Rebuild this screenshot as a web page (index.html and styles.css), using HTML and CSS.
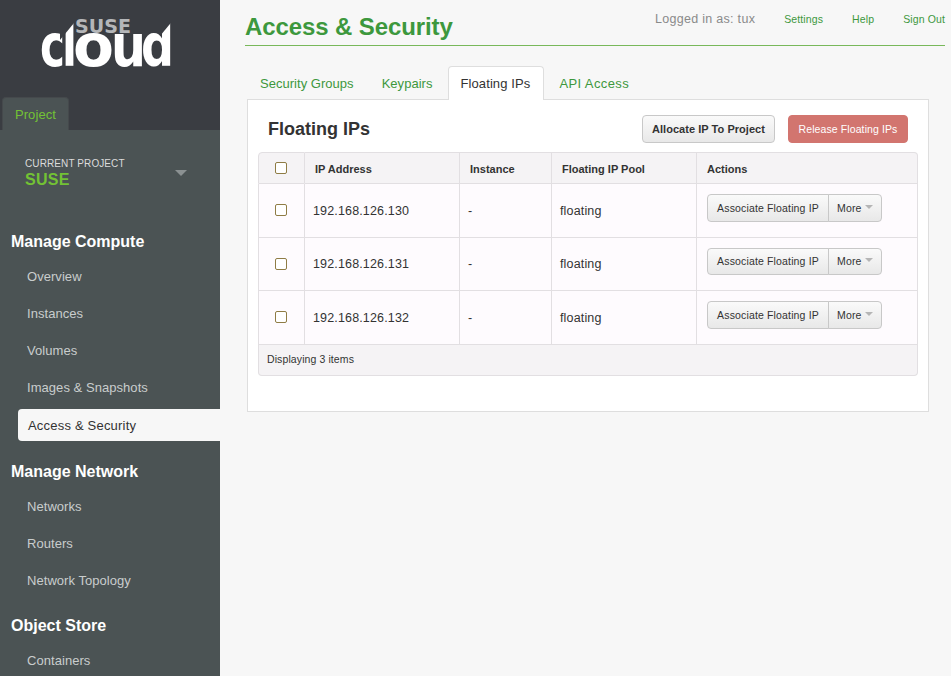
FILE: index.html
```html
<!DOCTYPE html>
<html lang="en">
<head>
<meta charset="utf-8">
<title>Access &amp; Security</title>
<link rel="stylesheet" href="styles.css">
</head>
<body>
<div class="page">
  <aside class="sidebar">
    <div class="brand">
      <svg class="logo" width="220" height="97" viewBox="0 0 220 97" role="img" aria-label="SUSE cloud">
        <text class="logo-cloud" x="40" y="66" textLength="25" lengthAdjust="spacingAndGlyphs">c</text>
        <text class="logo-cloud" x="62" y="66" textLength="15" lengthAdjust="spacingAndGlyphs">l</text>
        <text class="logo-cloud" x="73" y="66" textLength="41" lengthAdjust="spacingAndGlyphs">o</text>
        <text class="logo-cloud" x="111" y="66" textLength="35" lengthAdjust="spacingAndGlyphs">u</text>
        <text class="logo-cloud" x="141" y="66" textLength="33" lengthAdjust="spacingAndGlyphs">d</text>
        <polygon class="logo-cut" points="60,40 74,23 74,18 60,18"/>
        <polygon class="logo-cut" points="160,36 172,21.5 172,18 160,18"/>
        <text class="logo-suse" x="75" y="33" textLength="56" lengthAdjust="spacingAndGlyphs">SUSE</text>
      </svg>
      <div class="dash-tabs"><a class="dash-tab">Project</a></div>
    </div>
    <div class="nav-body">
      <div class="switcher">
        <div>
          <div class="switcher-label">CURRENT PROJECT</div>
          <div class="switcher-name">SUSE</div>
        </div>
        <span class="switcher-caret"></span>
      </div>
      <h4 class="nav-head nav-head-first">Manage Compute</h4>
      <ul class="nav-list">
        <li>Overview</li>
        <li>Instances</li>
        <li>Volumes</li>
        <li>Images &amp; Snapshots</li>
        <li class="active">Access &amp; Security</li>
      </ul>
      <h4 class="nav-head nav-head-network">Manage Network</h4>
      <ul class="nav-list">
        <li>Networks</li>
        <li>Routers</li>
        <li>Network Topology</li>
      </ul>
      <h4 class="nav-head">Object Store</h4>
      <ul class="nav-list">
        <li>Containers</li>
      </ul>
    </div>
  </aside>
  <main class="main">
    <header class="page-header">
      <h2 class="page-title">Access &amp; Security</h2>
      <div class="user-info">
        <span class="logged">Logged in as: tux</span>
        <a class="user-link">Settings</a>
        <a class="user-link">Help</a>
        <a class="user-link">Sign Out</a>
      </div>
    </header>
    <nav class="tabs">
      <a class="tab">Security Groups</a>
      <a class="tab">Keypairs</a>
      <a class="tab tab-active">Floating IPs</a>
      <a class="tab tab-last">API Access</a>
    </nav>
    <section class="panel">
      <div class="panel-head">
        <h3 class="panel-title">Floating IPs</h3>
        <div class="panel-actions">
          <button class="btn btn-strong">Allocate IP To Project</button>
          <button class="btn btn-danger">Release Floating IPs</button>
        </div>
      </div>
      <table class="table">
        <thead>
          <tr>
            <th class="col-check"><span class="check"></span></th>
            <th class="col-ip">IP Address</th>
            <th class="col-inst">Instance</th>
            <th class="col-pool">Floating IP Pool</th>
            <th>Actions</th>
          </tr>
        </thead>
        <tbody>
          <tr>
            <td class="col-check"><span class="check"></span></td>
            <td class="cell-ip">192.168.126.130</td>
            <td>-</td>
            <td>floating</td>
            <td class="cell-actions"><span class="btn-group"><button class="btn btn-small">Associate Floating IP</button><button class="btn btn-small btn-more">More<i class="more-caret"></i></button></span></td>
          </tr>
          <tr>
            <td class="col-check"><span class="check"></span></td>
            <td class="cell-ip">192.168.126.131</td>
            <td>-</td>
            <td>floating</td>
            <td class="cell-actions"><span class="btn-group"><button class="btn btn-small">Associate Floating IP</button><button class="btn btn-small btn-more">More<i class="more-caret"></i></button></span></td>
          </tr>
          <tr>
            <td class="col-check"><span class="check"></span></td>
            <td class="cell-ip">192.168.126.132</td>
            <td>-</td>
            <td>floating</td>
            <td class="cell-actions"><span class="btn-group"><button class="btn btn-small">Associate Floating IP</button><button class="btn btn-small btn-more">More<i class="more-caret"></i></button></span></td>
          </tr>
        </tbody>
        <tfoot>
          <tr><td colspan="5">Displaying 3 items</td></tr>
        </tfoot>
      </table>
    </section>
  </main>
</div>
</body>
</html>
```
FILE: styles.css
```css
* { box-sizing: border-box; }
html, body { margin: 0; height: 100%; overflow: hidden; }
body { background: #f7f7f7; font-family: "Liberation Sans", Arial, sans-serif; color: #333; }
.page { display: flex; height: 676px; overflow: hidden; }

.sidebar { width: 220px; flex: none; background: #4b5354; overflow: hidden; }
.brand { height: 130px; background: #3a3d42; display: flex; flex-direction: column; }
.logo { display: block; flex: none; }
.logo-suse { font: bold 19px "DejaVu Sans", sans-serif; fill: #b4b6b8; }
.logo-cloud { font: bold 58px "DejaVu Sans", sans-serif; fill: #fff; }
.logo-cut { fill: #3a3d42; }
.dash-tabs { padding-left: 2px; }
.dash-tab { display: block; width: 67px; height: 33px; background: #4b5354; border: 1px solid #45494c; border-bottom: 0; border-radius: 4px 4px 0 0; color: #73c234; font-size: 13px; line-height: 33px; text-align: center; letter-spacing: .1px; }

.nav-body { padding-top: 28px; }
.switcher { display: flex; justify-content: space-between; padding: 0 33px 0 25px; height: 33px; }
.switcher-label { font-size: 10px; line-height: 11px; color: #dcdcdc; letter-spacing: .1px; }
.switcher-name { font-size: 16px; font-weight: bold; line-height: 21px; color: #73c234; letter-spacing: .3px; }
.switcher-caret { margin-top: 12px; width: 0; height: 0; border: 6px solid transparent; border-top-color: #8b9192; border-bottom: 0; }
.nav-head { margin: 17px 0 0; padding-left: 11px; color: #fff; font-size: 16px; line-height: 20px; font-weight: bold; height: 20px; }
.nav-head-first { margin-top: 41px; }
.nav-head-network { margin-top: 21px; }
.nav-list { list-style: none; margin: 6px 0 0; padding: 0; }
.nav-list li { height: 37px; line-height: 37px; padding-left: 27px; font-size: 13px; color: #c9cdcd; letter-spacing: .05px; }
.nav-list li.active { height: 32px; line-height: 34px; margin: 3px 0 0 18px; padding-left: 10px; background: #f7f7f7; color: #333; border-radius: 4px 0 0 4px; letter-spacing: .2px; }

.main { flex: 1; min-width: 0; padding-left: 25px; padding-right: 6px; }
.page-header { display: flex; justify-content: space-between; height: 46px; border-bottom: 1px solid #78b85a; }
.page-title { margin: 13px 0 0; color: #3d983d; font-size: 24px; line-height: 28px; font-weight: bold; letter-spacing: -.1px; }
.user-info { display: flex; align-items: baseline; padding-top: 12px; line-height: 15px; font-size: 10.5px; }
.logged { font-size: 12.5px; color: #8a8a8a; margin-right: 29px; letter-spacing: .3px; }
.user-link { color: #3d983d; margin-left: 29px; letter-spacing: .12px; }
.logged + .user-link { margin-left: 0; }

.tabs { display: flex; margin: 20px 0 0 1px; height: 34px; position: relative; z-index: 1; }
.tab { display: block; height: 34px; padding: 0 13px; line-height: 33px; font-size: 13px; color: #3d983d; letter-spacing: .03px; border: 1px solid transparent; border-bottom: 0; }
.tab-active { flex: none; width: 96px; margin-left: 2px; padding: 0 11px; background: #fff; color: #333; border-color: #dedede; border-radius: 4px 4px 0 0; letter-spacing: .1px; }
.tab-last { margin-left: 1px; letter-spacing: .38px; }

.panel { width: 682px; height: 313px; margin: -1px 0 0 2px; background: #fff; border: 1px solid #dedede; padding: 0 10px; }
.panel-head { display: flex; justify-content: space-between; height: 52px; padding: 0 10px; }
.panel-title { margin: 0; padding-top: 18px; font-size: 18px; line-height: 22px; font-weight: bold; color: #333; }
.panel-actions { display: flex; gap: 13px; padding-top: 15px; }
.btn { font-family: "Liberation Sans", Arial, sans-serif; margin: 0; cursor: default; }
.btn-strong, .btn-danger { height: 28px; padding: 0; border-radius: 4px; }
.btn-strong { width: 133px; font-size: 11px; font-weight: bold; color: #333; border: 1px solid #c8c8c8; background: linear-gradient(#fafafa, #e8e8e8); letter-spacing: .04px; }
.btn-danger { width: 120px; font-size: 10.5px; color: #fff; background: #d2756f; border: 1px solid #d2756f; letter-spacing: .1px; }

.table { width: 660px; border-collapse: separate; border-spacing: 0; table-layout: fixed; font-size: 12.5px; color: #333; }
.table th, .table td { border-bottom: 1px solid #e2dfe2; border-right: 1px solid #e2dfe2; text-align: left; }
.table th:first-child, .table tbody td:first-child { border-left: 1px solid #e2dfe2; }
.table thead th { height: 32px; background: #f5f3f5; border-top: 1px solid #e2dfe2; font-size: 11px; padding: 2px 0 0 10px; color: #333; }
.table thead th:first-child { border-top-left-radius: 4px; }
.table thead th:last-child { border-top-right-radius: 4px; }
.table tbody td { background: #fefbfe; padding: 0 0 0 8px; letter-spacing: .15px; }
.table tbody tr:nth-child(1) td { height: 54px; }
.table tbody tr:nth-child(2) td { height: 53px; }
.table tbody tr:nth-child(3) td { height: 54px; }
.table .col-check, .table thead .col-check, .table tbody .col-check { width: 47px; padding: 0 2px 0 0; text-align: center; }
.col-ip { width: 155px; }
.col-inst { width: 92px; }
.col-pool { width: 145px; }
.check { display: inline-block; width: 12px; height: 12px; border: 1px solid #8f7c45; border-radius: 2px; background: #fff; vertical-align: middle; position: relative; top: -1px; }
.table tbody td.cell-actions { padding: 0 0 6px 10px; }
.btn-group { display: inline-flex; vertical-align: middle; }
.btn-small { height: 28px; padding: 0; border: 1px solid #c8c8c8; background: linear-gradient(#fafafa, #e8e8e8); color: #333; font-size: 10.5px; width: 122px; border-radius: 4px 0 0 4px; letter-spacing: .15px; }
.table tbody tr:nth-child(2) .btn-small { height: 27px; }
.btn-more { width: 54px; margin-left: -1px; border-radius: 0 4px 4px 0; text-align: left; padding-left: 8px; }
.more-caret { display: inline-block; width: 0; height: 0; margin: 0 0 3px 3px; border: 4px solid transparent; border-top-color: #b5b5b5; border-bottom: 0; }
.table tfoot td { height: 31px; background: #f5f3f5; border-left: 1px solid #e2dfe2; font-size: 10.5px; padding: 0 0 2px 8px; letter-spacing: .1px; border-bottom-left-radius: 4px; border-bottom-right-radius: 4px; }
```
